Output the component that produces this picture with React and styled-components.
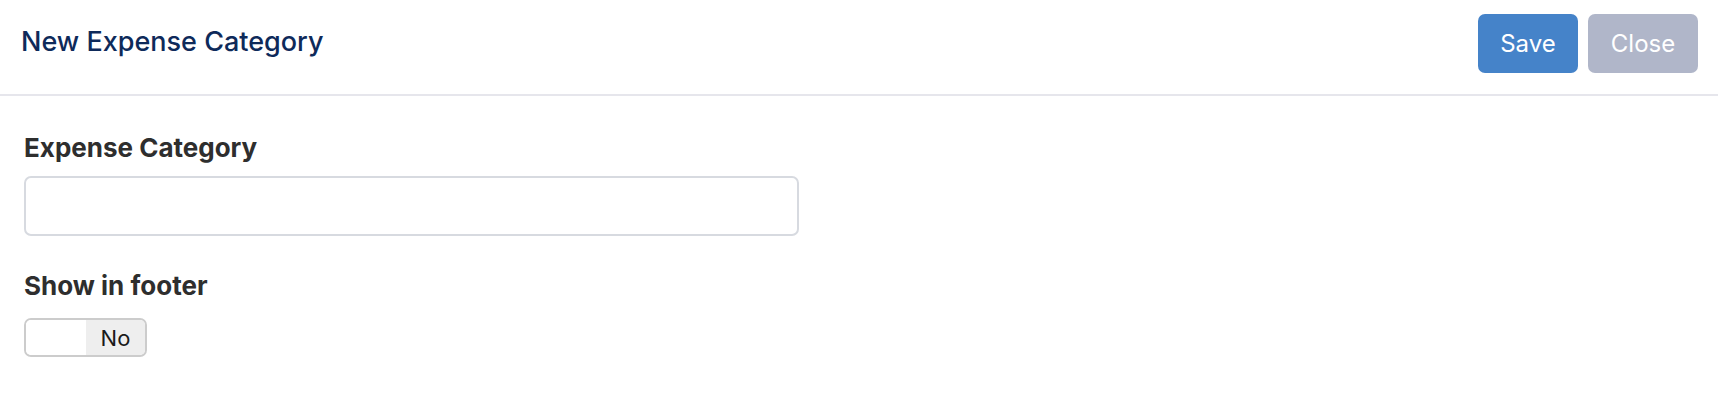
import React from "react";
import styled, { createGlobalStyle } from "styled-components";

const Global = createGlobalStyle`
  html, body { margin: 0; padding: 0; background: #fff; }
  body { font-family: Inter, "Noto Sans", sans-serif; }
  * { box-sizing: border-box; }
`;

const Header = styled.header`
  display: flex;
  align-items: center;
  justify-content: space-between;
  padding: 14px 20px 21px 21px;
  border-bottom: 2px solid #e6e6ec;
`;

const Title = styled.h1`
  margin: 0 0 3px 0;
  font-size: 27px;
  line-height: 32px;
  font-weight: 500;
  color: #0e2a5a;
`;

const Actions = styled.div`
  display: flex;
  gap: 10px;
`;

const Button = styled.button`
  height: 59px;
  width: ${(p) => p.$w}px;
  border: none;
  border-radius: 7px;
  background: ${(p) => p.$bg};
  color: #fff;
  font-family: Inter, sans-serif;
  font-size: 24px;
  font-weight: 400;
  cursor: pointer;
`;

const Body = styled.div`
  padding: 36px 24px;
  display: flex;
  flex-direction: column;
  align-items: flex-start;
`;

const Label = styled.label`
  font-size: 26px;
  line-height: 32px;
  font-weight: 700;
  color: #2e2e2e;
  margin-bottom: ${(p) => p.$gap}px;
`;

const Input = styled.input`
  width: 775px;
  height: 60px;
  border: 2px solid #d7dae0;
  border-radius: 7px;
  margin-bottom: 34px;
  font-size: 20px;
  padding: 0 14px;
  outline: none;
`;

const Toggle = styled.div`
  display: flex;
  width: 123px;
  height: 39px;
  border: 2px solid #cccccc;
  border-radius: 7px;
  overflow: hidden;
`;

const ToggleOff = styled.span`
  flex: 0 0 60px;
  background: #fff;
`;

const ToggleLabel = styled.span`
  flex: 1;
  display: flex;
  align-items: center;
  justify-content: center;
  background: #eeeeee;
  font-size: 22px;
  color: #1a1a1a;
  font-family: Inter, sans-serif;
`;

export default function App() {
  return (
    <>
      <Global />
      <Header>
        <Title>New Expense Category</Title>
        <Actions>
          <Button $w={100} $bg="#4583c9">Save</Button>
          <Button $w={110} $bg="#b0b6c9">Close</Button>
        </Actions>
      </Header>
      <Body>
        <Label $gap={12}>Expense Category</Label>
        <Input />
        <Label $gap={16}>Show in footer</Label>
        <Toggle>
          <ToggleOff />
          <ToggleLabel>No</ToggleLabel>
        </Toggle>
      </Body>
    </>
  );
}
